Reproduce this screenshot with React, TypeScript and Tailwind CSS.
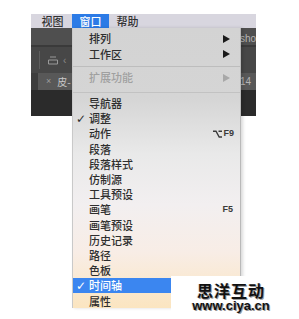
import React from 'react'

const Arrow = ({ color = '#1a1a1a' }: { color?: string }) => (
  <svg width="7" height="8" viewBox="0 0 7 8" className="mr-[4px]">
    <polygon points="0,0 7,4 0,8" fill={color} />
  </svg>
)

const OptionKey = () => (
  <svg width="9" height="8" viewBox="0 0 9 8" className="mr-[1px]">
    <path d="M0 1.2 H3 L6.2 7 H9 M5.5 1.2 H9" stroke="#3a3a3a" strokeWidth="1.4" fill="none" />
  </svg>
)

type Item = { label: string; check?: boolean; shortcut?: React.ReactNode; active?: boolean }

const items: Item[] = [
  { label: '导航器' },
  { label: '调整', check: true },
  {
    label: '动作',
    shortcut: (
      <span className="ml-auto flex items-center text-[9px] font-bold text-[#3a3a3a] font-['Liberation_Sans',sans-serif]">
        <OptionKey />F9
      </span>
    ),
  },
  { label: '段落' },
  { label: '段落样式' },
  { label: '仿制源' },
  { label: '工具预设' },
  {
    label: '画笔',
    shortcut: (
      <span className="ml-auto text-[9px] font-bold text-[#3a3a3a] font-['Liberation_Sans',sans-serif] mr-[1px]">F5</span>
    ),
  },
  { label: '画笔预设' },
  { label: '历史记录' },
  { label: '路径' },
  { label: '色板' },
  { label: '时间轴', check: true, active: true },
  { label: '属性' },
]

const App = () => {
  return (
    <div className="w-[299px] h-[319px] bg-white relative overflow-hidden font-['Noto_Sans_CJK_SC',sans-serif]">
      <div className="pt-[14px] pl-[31px]">
        <div className="relative w-[225px] h-[294px]">
          {/* Menu bar */}
          <div className="h-[14px] bg-[#d8d6df] flex items-center text-[11px] leading-none font-medium text-[#333]">
            <div className="w-[41px] h-full flex items-center justify-center pl-[2px]">视图</div>
            <div className="w-[37px] h-full flex items-center justify-center bg-[#2c7be6] text-white">窗口</div>
            <div className="w-[37px] h-full flex items-center justify-center">帮助</div>
          </div>

          {/* Dark app area behind the menu */}
          <div className="h-[88px] bg-[#2c2c2c] flex flex-col text-[10px] text-[#b4b4b4] font-['Liberation_Sans',sans-serif]">
            <div className="h-[17px] bg-[#4f4f4f] flex justify-end items-center">
              <div className="w-[16px] overflow-hidden whitespace-nowrap pt-[4px]">sho</div>
            </div>
            <div className="h-[2px] bg-[#3a3a3a]" />
            <div className="h-[26px] bg-[#474747] flex items-center">
              <div className="ml-[8px] w-px h-[18px] bg-[#5e5e5e]" />
              <svg width="10" height="9" viewBox="0 0 10 9" className="ml-[8px]">
                <path d="M2 1 H8 M0.5 4 H9.5 V8 H0.5 Z" stroke="#9a9a9a" strokeWidth="1" fill="none" />
              </svg>
              <span className="ml-[5px] text-[#8a8a8a]">‹</span>
            </div>
            <div className="h-[17px] bg-[#3d3d3d] flex pl-[7px]">
              <div className="flex-1 bg-[#585858] flex items-center justify-between">
                <div className="flex items-center">
                  <span className="ml-[8px] text-[9px] text-[#9c9c9c]">×</span>
                  <span className="ml-[6px] font-['Noto_Sans_CJK_SC',sans-serif] text-[#c8c8c8]">皮-</span>
                </div>
                <div className="w-[16px] overflow-hidden whitespace-nowrap">14</div>
              </div>
            </div>
            <div className="flex-1 bg-[#2b2b2b]" />
          </div>

          {/* Window dropdown */}
          <div className="absolute left-[41px] top-[14px] bottom-0 w-[169px] border-l border-l-[#c9c9c9] border-r border-r-[#b9b9b9] shadow-[2px_0_3px_rgba(0,0,0,0.15)] bg-[linear-gradient(to_bottom,#d3d3d3_0%,#d5d5d5_25%,#e9e9e9_45%,#f2eff0_63%,#f8ede6_80%,#fbe5c0_100%)] text-[11px] leading-none font-medium text-[#2e2e2e]">
            <div className="pt-[3px]">
              <div className="h-[15.5px] flex items-center justify-between pl-[16px] pr-[6px]">
                <span>排列</span>
                <Arrow />
              </div>
              <div className="h-[15.5px] flex items-center justify-between pl-[16px] pr-[6px]">
                <span>工作区</span>
                <Arrow />
              </div>
              <div className="mt-[4px] mb-[3px] h-px bg-[#bdbdbd]" />
              <div className="h-[15.5px] flex items-center justify-between pl-[16px] pr-[6px] text-[#a0a0a0]">
                <span>扩展功能</span>
                <Arrow color="#a8a8a8" />
              </div>
              <div className="mt-[6px] mb-[3.5px] h-px bg-[#c2c2c2]" />
              {items.map((it) => (
                <div
                  key={it.label}
                  className={`h-[15.2px] flex items-center pr-[6px] ${it.active ? 'bg-[#3b86f0] text-white' : ''}`}
                >
                  <span className="w-[16px] flex justify-center text-[12px] font-['DejaVu_Sans',sans-serif]">
                    {it.check ? '✓' : ''}
                  </span>
                  <span>{it.label}</span>
                  {it.shortcut}
                </div>
              ))}
            </div>
          </div>
        </div>
      </div>

      {/* Watermark */}
      <div className="absolute left-[171px] top-[276px] w-[128px] h-[43px] bg-white flex flex-col items-center pr-[8px] pt-[6px]">
        <div className="text-[16px] leading-[17px] font-bold tracking-[1px] text-[#111] [text-shadow:1px_1px_0_#9a9a9a,-1px_0_0_#e0e0e0]">
          思洋互动
        </div>
        <div className="text-[13px] leading-[13px] font-bold text-[#111] font-['Liberation_Sans',sans-serif] [text-shadow:1px_1px_0_#9a9a9a,-1px_0_0_#e0e0e0]">
          www.ciya.cn
        </div>
      </div>
    </div>
  )
}

export default App
